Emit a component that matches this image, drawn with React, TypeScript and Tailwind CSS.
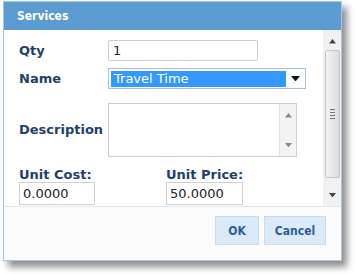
import React from "react";

const font = { fontFamily: '"DejaVu Sans", Verdana, sans-serif' };
const narrow = { fontFamily: '"DejaVu Sans Condensed", "DejaVu Sans", Tahoma, sans-serif' };

const Label: React.FC<{ children: React.ReactNode }> = ({ children }) => (
  <div className="w-[89px] shrink-0 text-[13px] font-bold text-[#1d3f6b]">{children}</div>
);

const Arrow: React.FC<{ up?: boolean; color?: string; size?: number }> = ({ up, color = "#8a8a8a", size = 7 }) => (
  <svg width={size} height={size / 2 + 1} viewBox="0 0 8 5">
    {up ? <path d="M0 5 L4 0 L8 5 Z" fill={color} /> : <path d="M0 0 L8 0 L4 5 Z" fill={color} />}
  </svg>
);

const App: React.FC = () => {
  return (
    <div className="w-[357px] h-[274px] bg-white" style={font}>
      <div className="ml-[3px] mt-[1px] w-[339px] h-[260px] border border-[#a9c8e8] bg-white flex flex-col shadow-[5px_6px_7px_rgba(0,0,0,0.45)]">
        <div className="h-[28px] bg-[#5c9bd0] flex items-center pl-[13px] text-[12px] font-bold text-white" style={narrow}>
          Services
        </div>

        <div className="flex h-[176px]">
          <div className="flex-1 pl-[15px] pt-[10px]">
            <div className="flex items-center h-[21px]">
              <Label>Qty</Label>
              <div className="w-[150px] h-[21px] border border-[#cfcfcf] rounded-[2px] flex items-center pl-[4px] text-[13px] text-[#222]">
                1
              </div>
            </div>

            <div className="flex items-center h-[21px] mt-[7px]">
              <Label>Name</Label>
              <div className="w-[198px] h-[21px] border border-[#a7bfd8] flex items-center pl-[2px] pr-[5px]">
                <div className="w-[175px] h-[16px] bg-[#3399ff] flex items-center pl-[3px] text-[13px] text-white">
                  Travel Time
                </div>
                <div className="flex-1 flex justify-end">
                  <Arrow color="#111" size={9} />
                </div>
              </div>
            </div>

            <div className="flex items-center h-[54px] mt-[14px]">
              <Label>Description</Label>
              <div className="w-[189px] h-[54px] border border-[#cfcfcf] flex">
                <div className="flex-1" />
                <div className="w-[17px] bg-[#f3f3f3] border-l border-[#e2e2e2] flex flex-col items-center justify-between py-[9px]">
                  <Arrow up />
                  <Arrow />
                </div>
              </div>
            </div>

            <div className="flex mt-[10px]">
              <div className="w-[147px]">
                <div className="text-[13px] font-bold text-[#1d3f6b] leading-[15px]">Unit Cost:</div>
                <div className="w-[76px] h-[23px] border border-[#cfcfcf] flex items-center pl-[3px] text-[13px] text-[#222]">
                  0.0000
                </div>
              </div>
              <div>
                <div className="text-[13px] font-bold text-[#1d3f6b] leading-[15px]">Unit Price:</div>
                <div className="w-[77px] h-[23px] border border-[#cfcfcf] flex items-center pl-[3px] text-[13px] text-[#222]">
                  50.0000
                </div>
              </div>
            </div>
          </div>

          <div className="w-[18px] bg-[#f1f1f1] flex flex-col items-center">
            <div className="h-[20px] flex items-center justify-center pt-[3px]">
              <Arrow up color="#444" />
            </div>
            <div className="w-[15px] h-[128px] border border-[#c4c4c4] rounded-[2px] bg-gradient-to-r from-[#f4f4f4] to-[#dcdcdc] flex flex-col items-center justify-center gap-[2px]">
              <div className="w-[5px] h-[1px] bg-[#777]" />
              <div className="w-[5px] h-[1px] bg-[#777]" />
              <div className="w-[5px] h-[1px] bg-[#777]" />
              <div className="w-[5px] h-[1px] bg-[#777]" />
            </div>
            <div className="flex-1 flex items-end pb-[9px]">
              <Arrow color="#444" />
            </div>
          </div>
        </div>

        <div className="flex-1 border-t border-[#dfe6ee] bg-[#fbfbfc] flex justify-end items-start pt-[9px] pr-[15px] gap-[5px]" style={narrow}>
          <div className="w-[44px] h-[29px] bg-[#dbeaf9] border border-[#c8dcf1] flex items-center justify-center text-[12px] font-bold text-[#2d5d98]">
            OK
          </div>
          <div className="w-[62px] h-[29px] bg-[#dbeaf9] border border-[#c8dcf1] flex items-center justify-center text-[12px] font-bold text-[#2d5d98]">
            Cancel
          </div>
        </div>
      </div>
    </div>
  );
};

export default App;
